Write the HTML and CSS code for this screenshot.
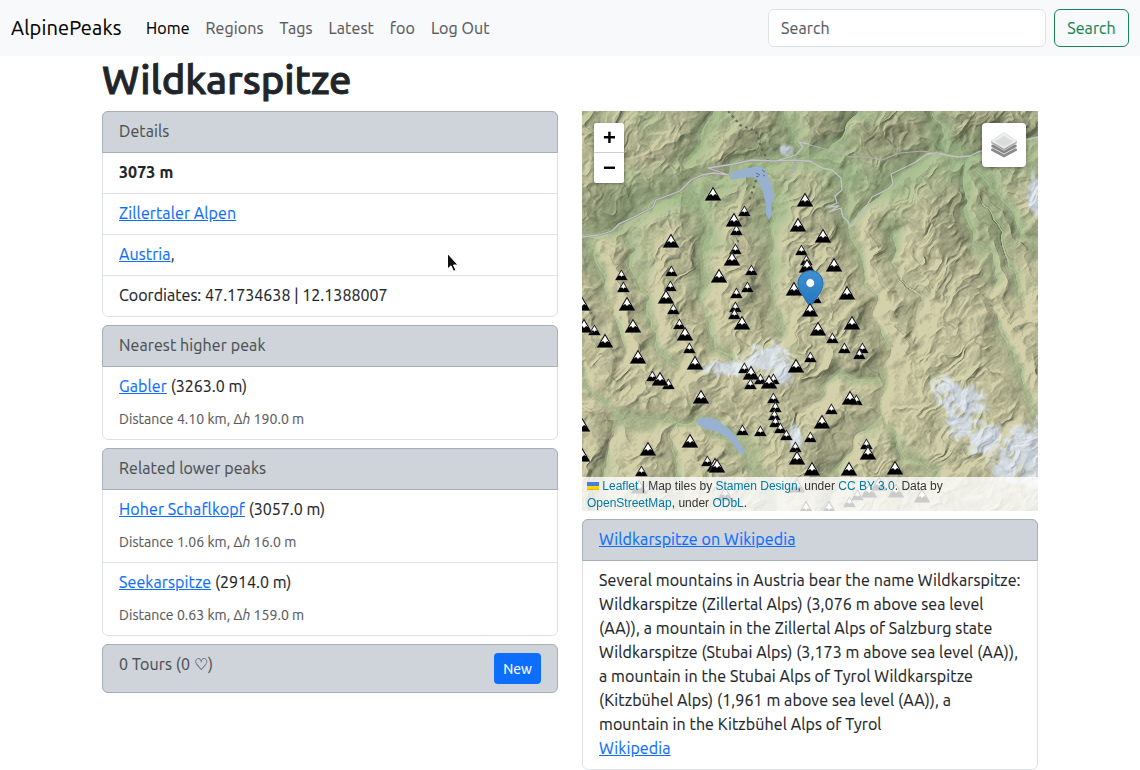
FILE: index.html
```
<!DOCTYPE html>
<html lang="en">
<head>
<meta charset="utf-8">
<title>Wildkarspitze – AlpinePeaks</title>
<link rel="stylesheet" href="styles.css">
</head>
<body>
<nav class="navbar">
  <a class="brand" href="#">AlpinePeaks</a>
  <ul class="nav">
    <li><a class="active" href="#">Home</a></li>
    <li><a href="#">Regions</a></li>
    <li><a href="#">Tags</a></li>
    <li><a href="#">Latest</a></li>
    <li><a href="#">foo</a></li>
    <li><a href="#">Log Out</a></li>
  </ul>
  <form class="search">
    <input type="search" placeholder="Search" aria-label="Search">
    <button type="button">Search</button>
  </form>
</nav>

<main class="container">
  <h1>Wildkarspitze</h1>
  <div class="columns">
    <div class="col">
      <ul class="group">
        <li class="head">Details</li>
        <li><strong>3073 m</strong></li>
        <li><a href="#">Zillertaler Alpen</a></li>
        <li><a href="#">Austria</a>,</li>
        <li class="coords">Coordiates: 47.1734638 | 12.1388007</li>
      </ul>
      <ul class="group">
        <li class="head">Nearest higher peak</li>
        <li><a href="#">Gabler</a> <span class="ele">(3263.0 m)</span><p class="meta">Distance 4.10 km, Δ<i>h</i> 190.0 m</p></li>
      </ul>
      <ul class="group">
        <li class="head">Related lower peaks</li>
        <li><a href="#">Hoher Schaflkopf</a> <span class="ele">(3057.0 m)</span><p class="meta">Distance 1.06 km, Δ<i>h</i> 16.0 m</p></li>
        <li><a href="#">Seekarspitze</a> <span class="ele">(2914.0 m)</span><p class="meta">Distance 0.63 km, Δ<i>h</i> 159.0 m</p></li>
      </ul>
      <ul class="group">
        <li class="head tours"><span>0 Tours (0 ♡)</span><button class="new" type="button">New</button></li>
      </ul>
    </div>

    <div class="col">
      <div class="map">
        <canvas id="terrain" class="layer" width="456" height="400"></canvas>
        <svg id="overlay" class="layer" width="456" height="400" viewBox="0 0 456 400">
          <defs>
            <linearGradient id="pin" x1="0" y1="0" x2="0" y2="1"><stop offset="0" stop-color="#3f93d2"/><stop offset="1" stop-color="#2273c0"/></linearGradient>
            <g id="peak">
              <path d="M8.500 0 17 14.500H0Z" fill="#000" stroke="#fff" stroke-opacity=".4" stroke-width=".6" stroke-linejoin="round"/>
              <path d="M8.500 2.200 12.600 9.200 10.600 7.700 8.500 9.700 6.600 7.700 4.400 9.200Z" fill="#fff"/>
            </g>
          </defs>
          <g fill="#98b1d0">
            <path d="M149 61 166 57 177 55 183 59 188 69 191 81 192 90 189 92 190 104 187 109 184 103 184 93 180 79 176 69 171 66 160 67 149 69Z"/>
            <path d="M115 308 125 306 135 309 147 318 154 326 163 341 161 343 157 341 147 328 136 321 124 318 116 314Z"/>
          </g>
          <path d="M174 62l4 2m-4 2l3-1m3-6l3 2m-2 3l2 1" stroke="#536fa5" stroke-width="1" fill="none"/>
          <path d="M146 0 158 14 174 20 179 36 187 52M174 69l-7 22M157 123l-2 12" fill="none" stroke="#55594f" stroke-opacity=".8" stroke-width="2.200" stroke-dasharray="2.500 3.500"/>
          <g fill="none" stroke-linejoin="round">
            <path d="M0 126 17 124 30 120 37 113 52 106 71 96 74 89 98 80 109 69 120 64 131 62 147 64 126 57 152 53 170 49 192 50 213 49 222 50" stroke="#8f8f86" stroke-width="2"/>
            <path d="M0 126 17 124 30 120 37 113 52 106 71 96 74 89 98 80 109 69 120 64 131 62 147 64 126 57 152 53 170 49 192 50 213 49 222 50 228 50 240 57 250 59 259 67 260 79 253 85 255 92 246 96 257 95 247 101 259 97 261 106 266 110 268 116 280 102 290 86 308 77 311 72 309 63 334 51 345 43 354 42 375 46 388 45 396 41 425 33 456 26M194 50 214 44 221 36 217 31 227 33" stroke="#c6c3c6" stroke-width="1.300"/>
            <path d="M228 34 243 38 255 41 268 46 285 46 300 49 318 42 340 40 358 43M215 50l-4 7 3 2-7 6" stroke="#b3aeb0" stroke-width="1.100"/>
          </g>
          <g id="peaks-back"></g>
          <g id="marker">
            <path d="M228 196 218 180C216 177 216 175 216 172A12.500 12.500 0 0 1 241 172C241 175 240 178 238 182Z" fill="url(#pin)" stroke="#266ea9" stroke-width="1"/>
            <circle cx="228.300" cy="172" r="4.400" fill="#fff" stroke="#2b6fa8" stroke-width=".7"/>
          </g>
          <g id="peaks-front"></g>
        </svg>
        <div class="zoom"><a href="#">+</a><a href="#">−</a></div>
        <div class="layers">
          <svg width="26" height="26" viewBox="0 0 26 26">
            <path d="M0 17 13 9.500 26 17V18.500L13 25.500 0 18.500Z" fill="#8b8b8b"/>
            <path d="M0 13 13 6 26 13V15L13 22 0 15Z" fill="#858585" stroke="#fff" stroke-width=".7"/>
            <path d="M0 9V11L13 18.500 26 11V9L13 16.500Z" fill="#949494" stroke="#fff" stroke-width=".5"/>
            <path d="M13 .5 26 9 13 16.500 0 9Z" fill="#eceeee" stroke="#d4d6d6" stroke-width=".6"/>
            <path d="M13 4 22 9.500 13 15 4 9.500Z" fill="#dadcdc"/>
          </svg>
        </div>
        <div class="attribution"><svg width="12" height="8" viewBox="0 0 12 8"><path fill="#4c7be1" d="M0 0h12v4H0z"/><path fill="#ffd500" d="M0 4h12v3H0z"/><path fill="#e0bc00" d="M0 7h12v1H0z"/></svg> <a href="#">Leaflet</a> | Map tiles by <a href="#">Stamen Design</a>, under <a href="#">CC BY 3.0</a>. Data by <br><a href="#">OpenStreetMap</a>, under <a href="#">ODbL</a>.</div>
      </div>
      <ul class="group">
        <li class="head"><a href="#">Wildkarspitze on Wikipedia</a></li>
        <li>Several mountains in Austria bear the name Wildkarspitze:<br>Wildkarspitze (Zillertal Alps) (3,076 m above sea level<br>(AA)), a mountain in the Zillertal Alps of Salzburg state<br>Wildkarspitze (Stubai Alps) (3,173 m above sea level (AA)),<br>a mountain in the Stubai Alps of Tyrol Wildkarspitze<br>(Kitzbühel Alps) (1,961 m above sea level (AA)), a<br>mountain in the Kitzbühel Alps of Tyrol<br><a href="#">Wikipedia</a></li>
      </ul>
    </div>
  </div>
</main>

<svg class="pointer" width="14" height="22" viewBox="0 0 14 22"><path d="M1.500 1.500V17L5 13.800 7.500 19.300 10 18.200 7.500 13H12Z" fill="#111" stroke="#fff" stroke-width="1"/></svg>
<script src="map.js"></script>
</body>
</html>
```
FILE: styles.css
```
* { box-sizing: border-box; }
body {
  margin: 0;
  height: 770px;
  overflow: hidden;
  background: #fff;
  color: #212529;
  font: 16px/24px Ubuntu, "Noto Sans", sans-serif;
  letter-spacing: .1px;
  -webkit-text-stroke: .15px currentColor;
}
ul { list-style: none; margin: 0; padding: 0; }
a { color: #0d6efd; }

.navbar { display: flex; align-items: center; height: 56px; padding: 0 11px; background: #f8f9fa; }
.brand { margin-right: 16.500px; font-size: 20px; line-height: 30px; letter-spacing: .15px; color: #000; text-decoration: none; }
.nav { display: flex; flex: 1; }
.nav a { display: block; padding: 8px; letter-spacing: .09px; color: #595a5b; text-decoration: none; }
.nav a.active { color: #000; }
.search { display: flex; gap: 8px; }
.search input, .search button { height: 38px; border-radius: 6px; font: inherit; letter-spacing: .1px; }
.search input { width: 278px; padding: 6px 12px; border: 1px solid #dee2e6; background: #fff; }
.search input::placeholder { color: #595c5f; opacity: 1; }
.search button { width: 75px; padding: 0; border: 1px solid #198754; background: none; color: #198754; }

.container { width: 936px; margin: 0 auto; }
h1 { margin: 0 0 7px; font-size: 40px; line-height: 48px; font-weight: 500; letter-spacing: -.1px; -webkit-text-stroke: .9px #212529; }
.columns { display: grid; grid-template-columns: 456px 456px; gap: 24px; align-items: start; }
.col { display: flex; flex-direction: column; gap: 8px; }

.group { border: 1px solid #dee2e6; border-radius: 6px; }
.group li { padding: 7px 16px 9px; border-top: 1px solid #dee2e6; }
.group .head { margin: -1px -1px 0; padding: 7px 16px 9px; border: 1px solid #a6aeb7; border-radius: 6px 6px 0 0; background: #ced4da; color: #4d5154; }
.group .head + li { border-top: 0; }
.group .head:only-child { margin: -1px; border-radius: 6px; }
.meta { margin: 9px 0 -1px; font-size: 14px; letter-spacing: .05px; color: #595c5f; }
.coords { letter-spacing: .03px; }
.ele { letter-spacing: 0; }
.group .tours { display: flex; justify-content: space-between; align-items: flex-start; padding-bottom: 8px; }
.new { width: 47px; height: 31px; margin-top: 1px; padding: 1px 0 0; border: 0; border-radius: 4px; background: #0d6efd; color: #fff; font: 14px/21px Ubuntu, "Noto Sans", sans-serif; }

.map { position: relative; height: 400px; overflow: hidden; background: #c5c9a2; -webkit-text-stroke: 0; }
.layer { position: absolute; inset: 0; }
.zoom { position: absolute; left: 12px; top: 12px; width: 30px; height: 60px; border-radius: 2px; background: #fff; box-shadow: 0 1px 3px rgba(0,0,0,.35); }
.zoom a { display: block; height: 29px; font: bold 22px/30px "Liberation Sans", sans-serif; letter-spacing: -1px; text-align: center; color: #000; text-decoration: none; }
.zoom a + a { border-top: 1px solid #ccc; }
.layers { position: absolute; right: 12px; top: 12px; display: grid; place-items: center; width: 44px; height: 44px; border-radius: 4px; background: #fff; box-shadow: 0 1px 4px rgba(0,0,0,.45); }
.attribution { position: absolute; inset: auto 0 0; height: 34px; padding: 1px 5px 0; background: rgba(255,255,255,.8); font: 12px/17px "Liberation Sans", Arial, sans-serif; letter-spacing: 0; color: #333; white-space: nowrap; }
.attribution a { color: #0078a8; text-decoration: none; }
.pointer { position: absolute; left: 446px; top: 252px; }
```
FILE: map.js
```
const W = 456, H = 400;

// Valley floors and ridge lines, in map pixels.
const valleys = [
  [0,126,30,118,75,88,100,78,120,63,145,61,170,50,225,50,260,60,262,90,268,116,285,95,312,70,345,42,380,46,420,38,456,26],
  [105,78,110,85,125,113,124,160,122,200,135,235,152,250],
  [175,58,187,80,188,110,186,150,192,195,198,220],
  [383,45,384,100,392,130,408,147,410,170],
  [268,116,272,135,285,160,293,200,300,225,309,240,305,270,300,305,328,343,360,366,390,400],
  [395,60,420,85,440,120,456,148], [400,90,415,125,428,150,440,195],
  [411,195,428,245,456,315],
  [8,133,24,165,24,190,40,242], [42,128,55,155,62,200,75,230,92,262],
  [0,268,25,290,40,310,90,313,120,310,150,330,165,345,185,372,190,400],
  [40,310,28,335,20,400], [92,313,97,350,102,400],
  [228,290,260,264,300,271], [299,308,270,328,253,360,250,400],
  [310,125,313,155,335,190,337,210], [273,0,258,30,228,50], [351,0,360,40],
  [130,0,112,40], [205,0,212,30,225,50]
];
const ridges = [
  [89,120,90,160,88,180,97,213,107,237,119,286],
  [160,95,150,148,168,160,154,196,160,212,150,240,165,258,190,270],
  [223,80,216,114,222,150,228,200,236,218,262,237,278,240],
  [241,120,252,154,265,182,270,212],
  [215,255,187,270,193,296,204,324,213,340,228,357,230,400],
  [213,340,240,311,268,289], [28,145,39,150,41,176,51,215,56,246,70,265,86,273,105,292],
  [0,190,12,219,23,230,30,262], [135,355,125,350,108,330], [66,338,59,365,60,400],
  [378,80,350,100,328,122,318,140], [378,80,370,130,360,165,355,200,350,235,352,265,375,290,400,325,430,335,456,320],
  [375,290,390,255,400,225,405,190], [318,150,325,178,345,180], [290,100,292,150,310,200,325,240],
  [0,75,30,40,60,45,90,30,115,0], [140,40,160,20,185,5], [235,15,300,20,340,12], [370,15,410,8,456,12],
  [398,80,405,105,430,150], [430,80,456,95], [415,180,440,230,456,260], [0,300,15,330,0,370],
  [275,333,285,360,300,385], [340,400,400,360], [330,290,345,310,370,345]
];

function hash(x, y) {
  let n = Math.imul(x, 374761393) ^ Math.imul(y, 668265263);
  n = Math.imul(n ^ (n >>> 13), 1274126177);
  return ((n ^ (n >>> 16)) >>> 0) / 4294967295;
}
function noise(x, y) {
  const i = Math.floor(x), j = Math.floor(y);
  let u = x - i, v = y - j;
  u = u * u * (3 - 2 * u); v = v * v * (3 - 2 * v);
  const a = hash(i, j), b = hash(i + 1, j), c = hash(i, j + 1), d = hash(i + 1, j + 1);
  return a + (b - a) * u + (c - a) * v + (a - b - c + d) * u * v;
}
function distance(lines, x, y) {
  let best = 1e9;
  for (const l of lines) {
    for (let i = 0; i + 3 < l.length; i += 2) {
      const dx = l[i + 2] - l[i], dy = l[i + 3] - l[i + 1];
      const t = Math.max(0, Math.min(1, ((x - l[i]) * dx + (y - l[i + 1]) * dy) / (dx * dx + dy * dy)));
      const ex = x - l[i] - t * dx, ey = y - l[i + 1] - t * dy;
      best = Math.min(best, ex * ex + ey * ey);
    }
  }
  return Math.sqrt(best);
}
const clamp = (v) => Math.max(0, Math.min(1, v));

const W1 = W + 1, height = new Float32Array(W1 * (H + 1)), level = new Float32Array(W1 * (H + 1));
for (let y = 0; y <= H; y++) {
  for (let x = 0; x <= W; x++) {
    const wx = x + 12 * (noise(x / 17, y / 17) - .5) + 4 * (noise(x / 6 + 40, y / 6) - .5);
    const wy = y + 12 * (noise(x / 17 + 90, y / 17) - .5) + 4 * (noise(x / 6, y / 6 + 70) - .5);
    const v = distance(valleys, wx, wy), r = distance(ridges, wx, wy);
    const k = v / (v + r + 2);
    // Side ridges run south-west to north-east.
    const a = wx * .75 + wy * .66, b = wy * .75 - wx * .66;
    const spur = 1 - Math.abs(2 * noise(a / 17 + 5, b / 30 + 9) - 1);
    const gully = 1 - Math.abs(2 * noise(a / 8 + 7, b / 13 + 3) - 1);
    const fine = noise(a / 3 + 17, b / 5 + 31);
    const steep = clamp((v - 3) / 16);
    level[y * W1 + x] = k;
    height[y * W1 + x] = 17 * k + steep * (11 * spur + 6 * gully + 2.800 * fine) + .8 * noise(x / 2, y / 2);
  }
}

// Glaciers and snow fields: x, y, radius x, radius y.
const snow = [[185,248,24,15],[150,257,30,7],[198,262,10,12],[192,240,8,10],[213,325,7,13],[365,275,16,10],[382,290,22,15],[380,313,16,14],[405,328,20,18],[440,335,24,20],[452,345,30,34],[425,358,16,15],[452,85,7,18],[203,38,7,5]];
// Slopes facing away from the light, as broad shadows.
const shadows = [[160,25,50,22,.5],[290,22,60,24,.8],[400,15,60,22,.8],[25,95,40,22,.6],[35,40,40,22,.4],[265,70,20,18,.6],[363,120,22,35,.7],[395,175,14,24,.4],[420,115,22,35,.4],[255,120,25,22,.5],[275,225,22,32,.5],[170,180,16,40,.4],[270,258,28,12,.5],[155,290,45,12,.4],[240,345,22,25,.5],[310,365,30,14,.5],[345,175,16,22,.3]];
const mix = (a, b, t) => a.map((c, i) => c + (b[i] - c) * t);

const ctx = document.getElementById("terrain").getContext("2d");
const image = ctx.createImageData(W, H);
for (let y = 0; y < H; y++) {
  for (let x = 0; x < W; x++) {
    const i = y * W1 + x, k = level[i];
    const gx = height[i + 1] - height[i], gy = height[i + W1] - height[i];
    const slope = gx * .8 + gy * .6;
    const north = clamp((190 - y + 25 * (noise(x / 30, y / 30) - .5)) / 110);
    const patch = noise(x / 22 + 3, y / 22 + 8);
    let c = mix(mix([186, 198, 155], [168, 192, 145], north), [212, 209, 170], clamp((k - .05 + .35 * (patch - .5)) / (.18 + .75 * north)));
    let s = 0, gloom = 0;
    for (const [sx, sy, rx, ry] of snow) {
      s = Math.max(s, 1.200 - Math.hypot((x - sx) / rx, (y - sy) / ry) + .9 * (noise(x / 5, y / 5) - .5));
    }
    for (const [sx, sy, rx, ry, depth] of shadows) {
      gloom = Math.max(gloom, depth * clamp(1.200 - Math.hypot((x - sx) / rx, (y - sy) / ry) + .7 * (noise(x / 9, y / 9) - .5)));
    }
    const ice = clamp(s * 1.600);
    c = mix(c, [228, 236, 243], ice * .92);
    const shade = clamp(.78 + slope * .22 - .08 * north * k - .42 * gloom * clamp(k * 4));
    const dark = mix([80, 87, 66], [140, 150, 168], ice);
    c = mix(dark, c, .15 + .85 * shade);
    const p = (y * W + x) * 4;
    image.data[p] = c[0]; image.data[p + 1] = c[1]; image.data[p + 2] = c[2]; image.data[p + 3] = 255;
  }
}
ctx.putImageData(image, 0, 0);

// Summits: centre x, centre y.
const small = [162,100,154,119,153,138,169,159,165,176,154,182,153,196,152,203,39,164,41,176,89,160,88,175,91,198,219,139,224,149,233,187,12,219,97,213,107,237,70,265,86,273,162,257,178,268,191,268,168,273,191,287,193,296,192,304,193,311,198,317,204,324,160,319,178,320,213,336,125,350,59,360,228,326,228,246,250,227,262,237,280,237,277,243,274,289,249,298,284,333,275,384,267,391];
const large = [131,83,89,130,152,109,223,89,216,114,150,148,137,165,84,186,212,178,45,193,0,193,241,125,252,154,265,182,225,155,2,215,51,215,23,230,56,246,103,223,113,252,78,268,119,286,160,212,169,262,187,271,214,255,108,330,66,338,133,354,135,355,0,314,0,344,215,347,236,218,270,212,268,287,240,311,286,342,267,358,313,357,230,358,57,376,143,383,215,375,224,397,297,373,287,380,314,380,340,385,247,397];
const svgNS = "http://www.w3.org/2000/svg";
function addPeak(group, x, y, scale) {
  const use = document.createElementNS(svgNS, "use");
  use.setAttribute("href", "#peak");
  use.setAttribute("transform", `translate(${x - 8.5 * scale} ${y - 7.7 * scale}) scale(${scale})`);
  document.getElementById(group).append(use);
}
for (let i = 0; i < small.length; i += 2) addPeak("peaks-back", small[i] + .4, small[i + 1] + .2, .76);
for (let i = 0; i < large.length; i += 2) addPeak("peaks-back", large[i], large[i + 1], 1);
addPeak("peaks-front", 228, 199, 1);
```
